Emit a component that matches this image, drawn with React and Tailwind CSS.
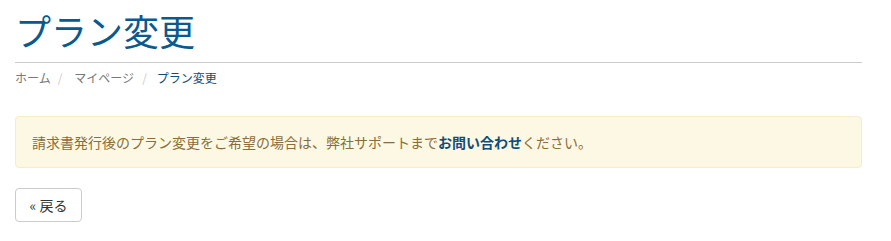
import React from "react";

const jp = "font-['Noto_Sans_CJK_JP','Noto_Sans',sans-serif]";

export default function App() {
  return (
    <div className={`min-h-screen bg-white px-[15px] pt-[10px] ${jp}`}>
      <div className="w-[847px]">
        <h1 className="border-b border-[#cccccc] pb-[12px] text-[36px] leading-[40px] font-normal text-[#0b5a8e]">
          プラン変更
        </h1>

        <nav className="mt-[6px] flex items-center text-[12px] leading-[18px]">
          <span className="text-[#777777]">ホーム</span>
          <span className="pl-[7px] pr-[12px] text-[#cccccc]">/</span>
          <span className="text-[#777777]">マイページ</span>
          <span className="pl-[8px] pr-[10px] text-[#cccccc]">/</span>
          <span className="text-[#0e4e7a]">プラン変更</span>
        </nav>

        <div className="mt-[29px] rounded-[4px] border border-[#faebcc] bg-[#fcf8e3] px-[16px] py-[15px] text-[14px] leading-[20px] text-[#8a6d3b]">
          請求書発行後のプラン変更をご希望の場合は、弊社サポートまで
          <a href="#" className="font-bold text-[#0e4e7a]">お問い合わせ</a>
          ください。
        </div>

        <button
          type="button"
          className="mt-[20px] h-[34px] w-[67px] rounded-[4px] border border-[#cccccc] bg-white text-[14px] text-[#333333]"
        >
          « 戻る
        </button>
      </div>
    </div>
  );
}
